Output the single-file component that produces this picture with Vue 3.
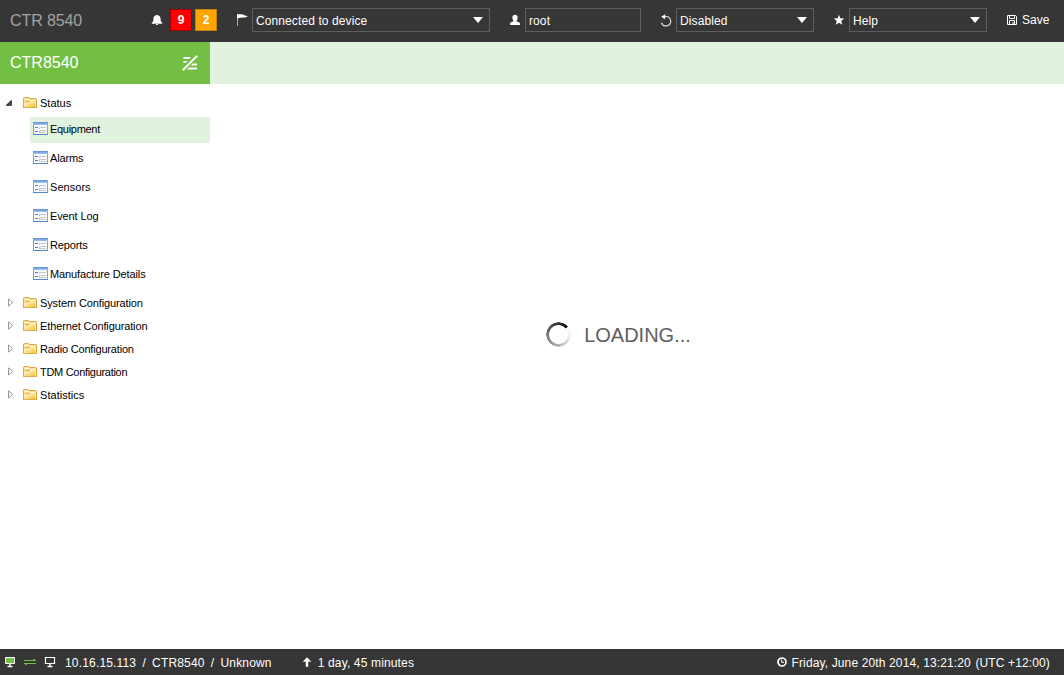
<script setup>
const pages = [
  { name: 'Equipment', active: true, tone: 'tight' },
  { name: 'Alarms', tone: 'normal' },
  { name: 'Sensors', tone: 'wide' },
  { name: 'Event Log', tone: 'normal' },
  { name: 'Reports', tone: 'normal' },
  { name: 'Manufacture Details', tone: 'normal' }
]
const folders = [
  { name: 'System Configuration', tone: 'normal' },
  { name: 'Ethernet Configuration', tone: 'normal' },
  { name: 'Radio Configuration', tone: 'snug' },
  { name: 'TDM Configuration', tone: 'tight' },
  { name: 'Statistics', tone: 'wide' }
]
</script>

<template>
  <div class="app">
    <svg width="0" height="0" class="defs">
      <defs>
        <linearGradient id="gold" x1="0" y1="0" x2="1" y2="1">
          <stop offset="0" stop-color="#fff6d0" /><stop offset="1" stop-color="#efbf28" />
        </linearGradient>
        <linearGradient id="bar" x1="0" y1="0" x2="0" y2="1">
          <stop offset="0" stop-color="#5c8ed2" /><stop offset="1" stop-color="#a4c6f0" />
        </linearGradient>
        <symbol id="folder" viewBox="0 0 14 12">
          <path d="M.5 10.5V1.500Q.5.5 1.500.5H5.500l1 1h6q1 0 1 1v8z" fill="#f9dc86" stroke="#dba84a" />
          <path d="M1.500 2.500H6M7 3.500h5" stroke="#fffbe6" />
          <path d="M3 4.500h3" stroke="#e0ad49" />
          <path d="M1.500 10.500V6.500H6l1.500-1.500h5v5.500z" fill="url(#gold)" stroke="#fff3c4" stroke-width=".6" />
          <path d="M.5 10.500h13V3" fill="none" stroke="#d7a33e" stroke-width=".8" />
        </symbol>
        <symbol id="form" viewBox="0 0 15 13">
          <path d="M.5.5h14v12H.5z" fill="#f7fafe" stroke="#7fa3d6" />
          <path d="M0 0h15v3H0z" fill="url(#bar)" />
          <path d="M2 5.500h3M2 9.500h3" stroke="#4d7fc8" />
          <path d="M6.500 7V5.500H13M6.500 11V8.500H13M6.500 10.500H13" fill="none" stroke="#c6c6c6" />
          <path d="M0 12.500h15" stroke="#5487cc" />
        </symbol>
      </defs>
    </svg>

    <header class="top">
      <span class="brand">CTR 8540</span>
      <svg class="bell" width="12" height="12" viewBox="0 0 12 12"><path d="M5.200 1.200q.8-1 1.600 0C9 1.800 9.600 3.200 9.600 5c0 2 .2 2.800 1.600 3.800v1H.8v-1C2.200 7.800 2.400 7 2.400 5c0-1.800.6-3.200 2.800-3.800zM4.700 10h2.600q-.1 1-1.300 1t-1.300-1z" fill="#fff" /></svg>
      <b class="badge red">9</b><b class="badge orange">2</b>
      <svg class="flag" width="12" height="14" viewBox="0 0 12 14"><path d="M.5 1v12" stroke="#aaa" /><path d="M0 1.300h4q2 0 3.500 1 1.500.8 3.500.7Q9 4.500 6.500 4.500T0 5.500z" fill="#fff" /></svg>
      <div class="field w238"><span>Connected to device</span><i class="caret"></i></div>
      <svg class="user" width="12" height="12" viewBox="0 0 12 12"><path d="M6 .8c2 0 2.800 1.300 2.600 3.200C8.500 5.600 7.700 6.200 7.500 7c0 .8 3.500 1 3.500 2.400V11H1V9.400C1 8 4.500 7.800 4.500 7c-.2-.8-1-1.400-1.100-3C3.200 2.100 4 .8 6 .8z" fill="#fff" /></svg>
      <div class="field w116"><span>root</span></div>
      <svg class="undo" width="12" height="13" viewBox="0 0 12 13"><path d="M3.500 2.500H6a4.700 4.700 0 1 1-4.500 6.200" fill="none" stroke="#ddd" stroke-width="1.200" /><path d="M1.200 2.700L5.200.2v5z" fill="#fff" /></svg>
      <div class="field w138"><span>Disabled</span><i class="caret"></i></div>
      <svg class="star" width="12" height="12" viewBox="0 0 12 12"><path d="M6 .8l1.400 3.500 3.800.3-2.900 2.400.9 3.800L6 8.700l-3.200 2.100.9-3.800L.8 4.600l3.800-.3z" fill="#fff" /></svg>
      <div class="field w138"><span>Help</span><i class="caret"></i></div>
      <svg class="disk" width="10" height="10" viewBox="0 0 10 10"><path d="M.5.5h8l1 1v8h-9z" fill="none" stroke="#fff" /><path d="M2.500.5v3h5v-3M2.500 9.500v-4h5v4" fill="none" stroke="#fff" /><path d="M5.500 7h1v2h-1z" fill="#fff" /></svg>
      <span class="save">Save</span>
    </header>

    <div class="sub">
      <div class="device">
        <span>CTR8540</span>
        <svg width="16" height="16" viewBox="0 0 16 16"><path d="M1.500 2h7.500l-2 2H1.500zM1.500 6h4L3.500 8h-2zM10.800 8.500H15v2H8.800zM7 12.500h8v2H5z" fill="#fff" /><path d="M.8 15.200L15.200.8" stroke="#fff" stroke-width="2" /></svg>
      </div>
    </div>

    <main class="body">
      <nav class="tree">
        <div class="row first">
          <svg class="arrow" width="8" height="8" viewBox="0 0 8 8"><path d="M6.300 1.500v4.800H1.300z" fill="#555" stroke="#111" stroke-width=".9" /></svg>
          <svg class="folder" width="14" height="12"><use href="#folder" /></svg>
          <span>Status</span>
        </div>
        <div v-for="p in pages" :key="p.name" class="page" :class="[p.tone, { active: p.active }]">
          <svg width="15" height="13"><use href="#form" /></svg><span>{{ p.name }}</span>
        </div>
        <div v-for="f in folders" :key="f.name" class="row" :class="f.tone">
          <svg class="arrow closed" width="8" height="9" viewBox="0 0 8 9"><path d="M1.500.9v7.200L5.800 4.500z" fill="#fff" stroke="#999" /></svg>
          <svg class="folder" width="14" height="12"><use href="#folder" /></svg>
          <span>{{ f.name }}</span>
        </div>
      </nav>
      <section class="content">
        <div class="spinner"></div>
        <span>LOADING...</span>
      </section>
    </main>

    <footer class="foot">
      <svg class="mon" width="12" height="12" viewBox="0 0 12 12"><path d="M1.500 1.500h9v6h-9z" fill="#72bf44" stroke="#fff" /><path d="M6 8v2.500M3.500 10.500h5" stroke="#fff" stroke-width="1.400" /></svg>
      <svg class="link" width="14" height="8" viewBox="0 0 14 8"><path d="M1 2.500h12M1 5.500h12" stroke="#72bf44" /><path d="M10 .5l3 2h-3zM4 7.500l-3-2h3z" fill="#72bf44" /></svg>
      <svg class="mon2" width="12" height="12" viewBox="0 0 12 12"><path d="M1.500 1.500h9v6h-9z" fill="none" stroke="#fff" stroke-width="1.200" /><path d="M6 8v2.500M3.500 10.500h5" stroke="#fff" stroke-width="1.400" /></svg>
      <span class="addr">10.16.15.113&ensp;/&ensp;CTR8540&ensp;/&ensp;Unknown</span>
      <svg class="up" width="10" height="10" viewBox="0 0 10 10"><path d="M5 .3l4.300 4.500H6.200v5H3.800v-5H.7z" fill="#fff" /></svg>
      <span class="uptime">1 day, 45 minutes</span>
      <svg class="clock" width="10" height="10" viewBox="0 0 10 10"><circle cx="5" cy="5" r="4" fill="none" stroke="#fff" stroke-width="1.700" /><path d="M4.700 2.500v2.800H7" fill="none" stroke="#fff" /></svg>
      <span class="date">Friday, June 20th 2014, 13:21:20&nbsp;<i class="gap"></i>(UTC +12:00)</span>
    </footer>
  </div>
</template>

<style>
body { margin: 0; overflow: hidden; background: #fff; }
</style>

<style scoped>
.app { width: 1064px; height: 675px; display: flex; flex-direction: column; font: 12px/14px "Liberation Sans", Arial, sans-serif; color: #fff; }
.defs { position: absolute; }
svg { display: block; flex: none; }
span { white-space: pre; }
.top { height: 42px; flex: none; background: #363636; display: flex; align-items: center; box-sizing: border-box; padding-bottom: 2px; }
.brand { width: 141px; padding: 2px 0 0 10px; font-size: 16px; line-height: 18px; letter-spacing: -.1px; color: #a3a3a3; }
.badge { width: 22px; height: 22px; box-sizing: border-box; border: 1px solid; text-align: center; line-height: 20px; flex: none; }
.red { background: #f00; border-color: #a00000; margin-left: 7px; }
.orange { background: #ffa500; border-color: #c98000; margin-left: 3px; }
.flag { margin-left: 20px; }
.field { height: 24px; box-sizing: border-box; border: 1px solid #5e5e5e; display: flex; align-items: center; justify-content: space-between; padding: 1px 6px 0 3px; flex: none; letter-spacing: .1px; }
.w238 { width: 238px; margin-left: 3px; }
.w116 { width: 116px; margin-left: 4px; }
.w138 { width: 138px; margin-left: 4px; }
.caret { border: 5px solid transparent; border-top: 6px solid #fff; border-bottom: 0; margin-bottom: 1px; }
.user { margin-left: 19px; }
.undo { margin-left: 19px; }
.star { margin-left: 19px; }
.disk { margin-left: 20px; }
.save { margin-left: 5px; }
.sub { height: 42px; flex: none; background: #e1f3de; display: flex; }
.device { width: 210px; box-sizing: border-box; padding: 0 12px 0 10px; background: #72bf44; display: flex; align-items: center; justify-content: space-between; font-size: 16px; }
.body { flex: 1; display: flex; min-height: 0; }
.tree { width: 210px; padding-top: 8px; color: #000; font-size: 11px; letter-spacing: -.08px; flex: none; }
.row { height: 23px; display: flex; align-items: center; padding-left: 5px; }
.row.first { height: 22px; margin-bottom: 3px; letter-spacing: 0; }
.normal { letter-spacing: -.12px; }
.snug { letter-spacing: -.18px; }
.tight { letter-spacing: -.3px; }
.wide { letter-spacing: .04px; }
.folder { margin: 0 3px 0 10px; }
.page { height: 26px; margin: 0 0 3px 30px; padding-left: 3px; display: flex; align-items: center; }
.page svg { margin: 0 2px 3px 0; }
.page span { padding-bottom: 2px; }
.active { background: #e1f3de; }
.closed { margin-left: 2px; margin-right: -2px; }
.content { flex: 1; display: flex; align-items: center; justify-content: center; font-size: 20px; line-height: 24px; color: #606060; padding: 0 37px 64px 0; }
.spinner { width: 25px; height: 25px; border-radius: 50%; margin-right: 13px; background: conic-gradient(#333, #000 48deg, #fff 52deg, #eee 100deg, #bbb 170deg, #777 270deg, #333); -webkit-mask: radial-gradient(circle, transparent 9px, #000 9.7px, #000 12px, transparent 12.5px); mask: radial-gradient(circle, transparent 9px, #000 9.7px, #000 12px, transparent 12.5px); }
.foot { height: 26px; flex: none; background: #363636; display: flex; align-items: center; }
.foot span { letter-spacing: .15px; padding-top: 2px; }
.mon { margin-left: 4px; }
.link { margin-left: 7px; }
.mon2 { margin-left: 7px; }
.foot .addr { margin-left: 9px; letter-spacing: .17px; }
.up { margin-left: 30px; }
.uptime { margin-left: 6px; }
.clock { margin-left: auto; }
.foot .date { margin: 0 14px 0 5px; letter-spacing: .13px; }
.gap { display: inline-block; width: 1px; }
</style>
